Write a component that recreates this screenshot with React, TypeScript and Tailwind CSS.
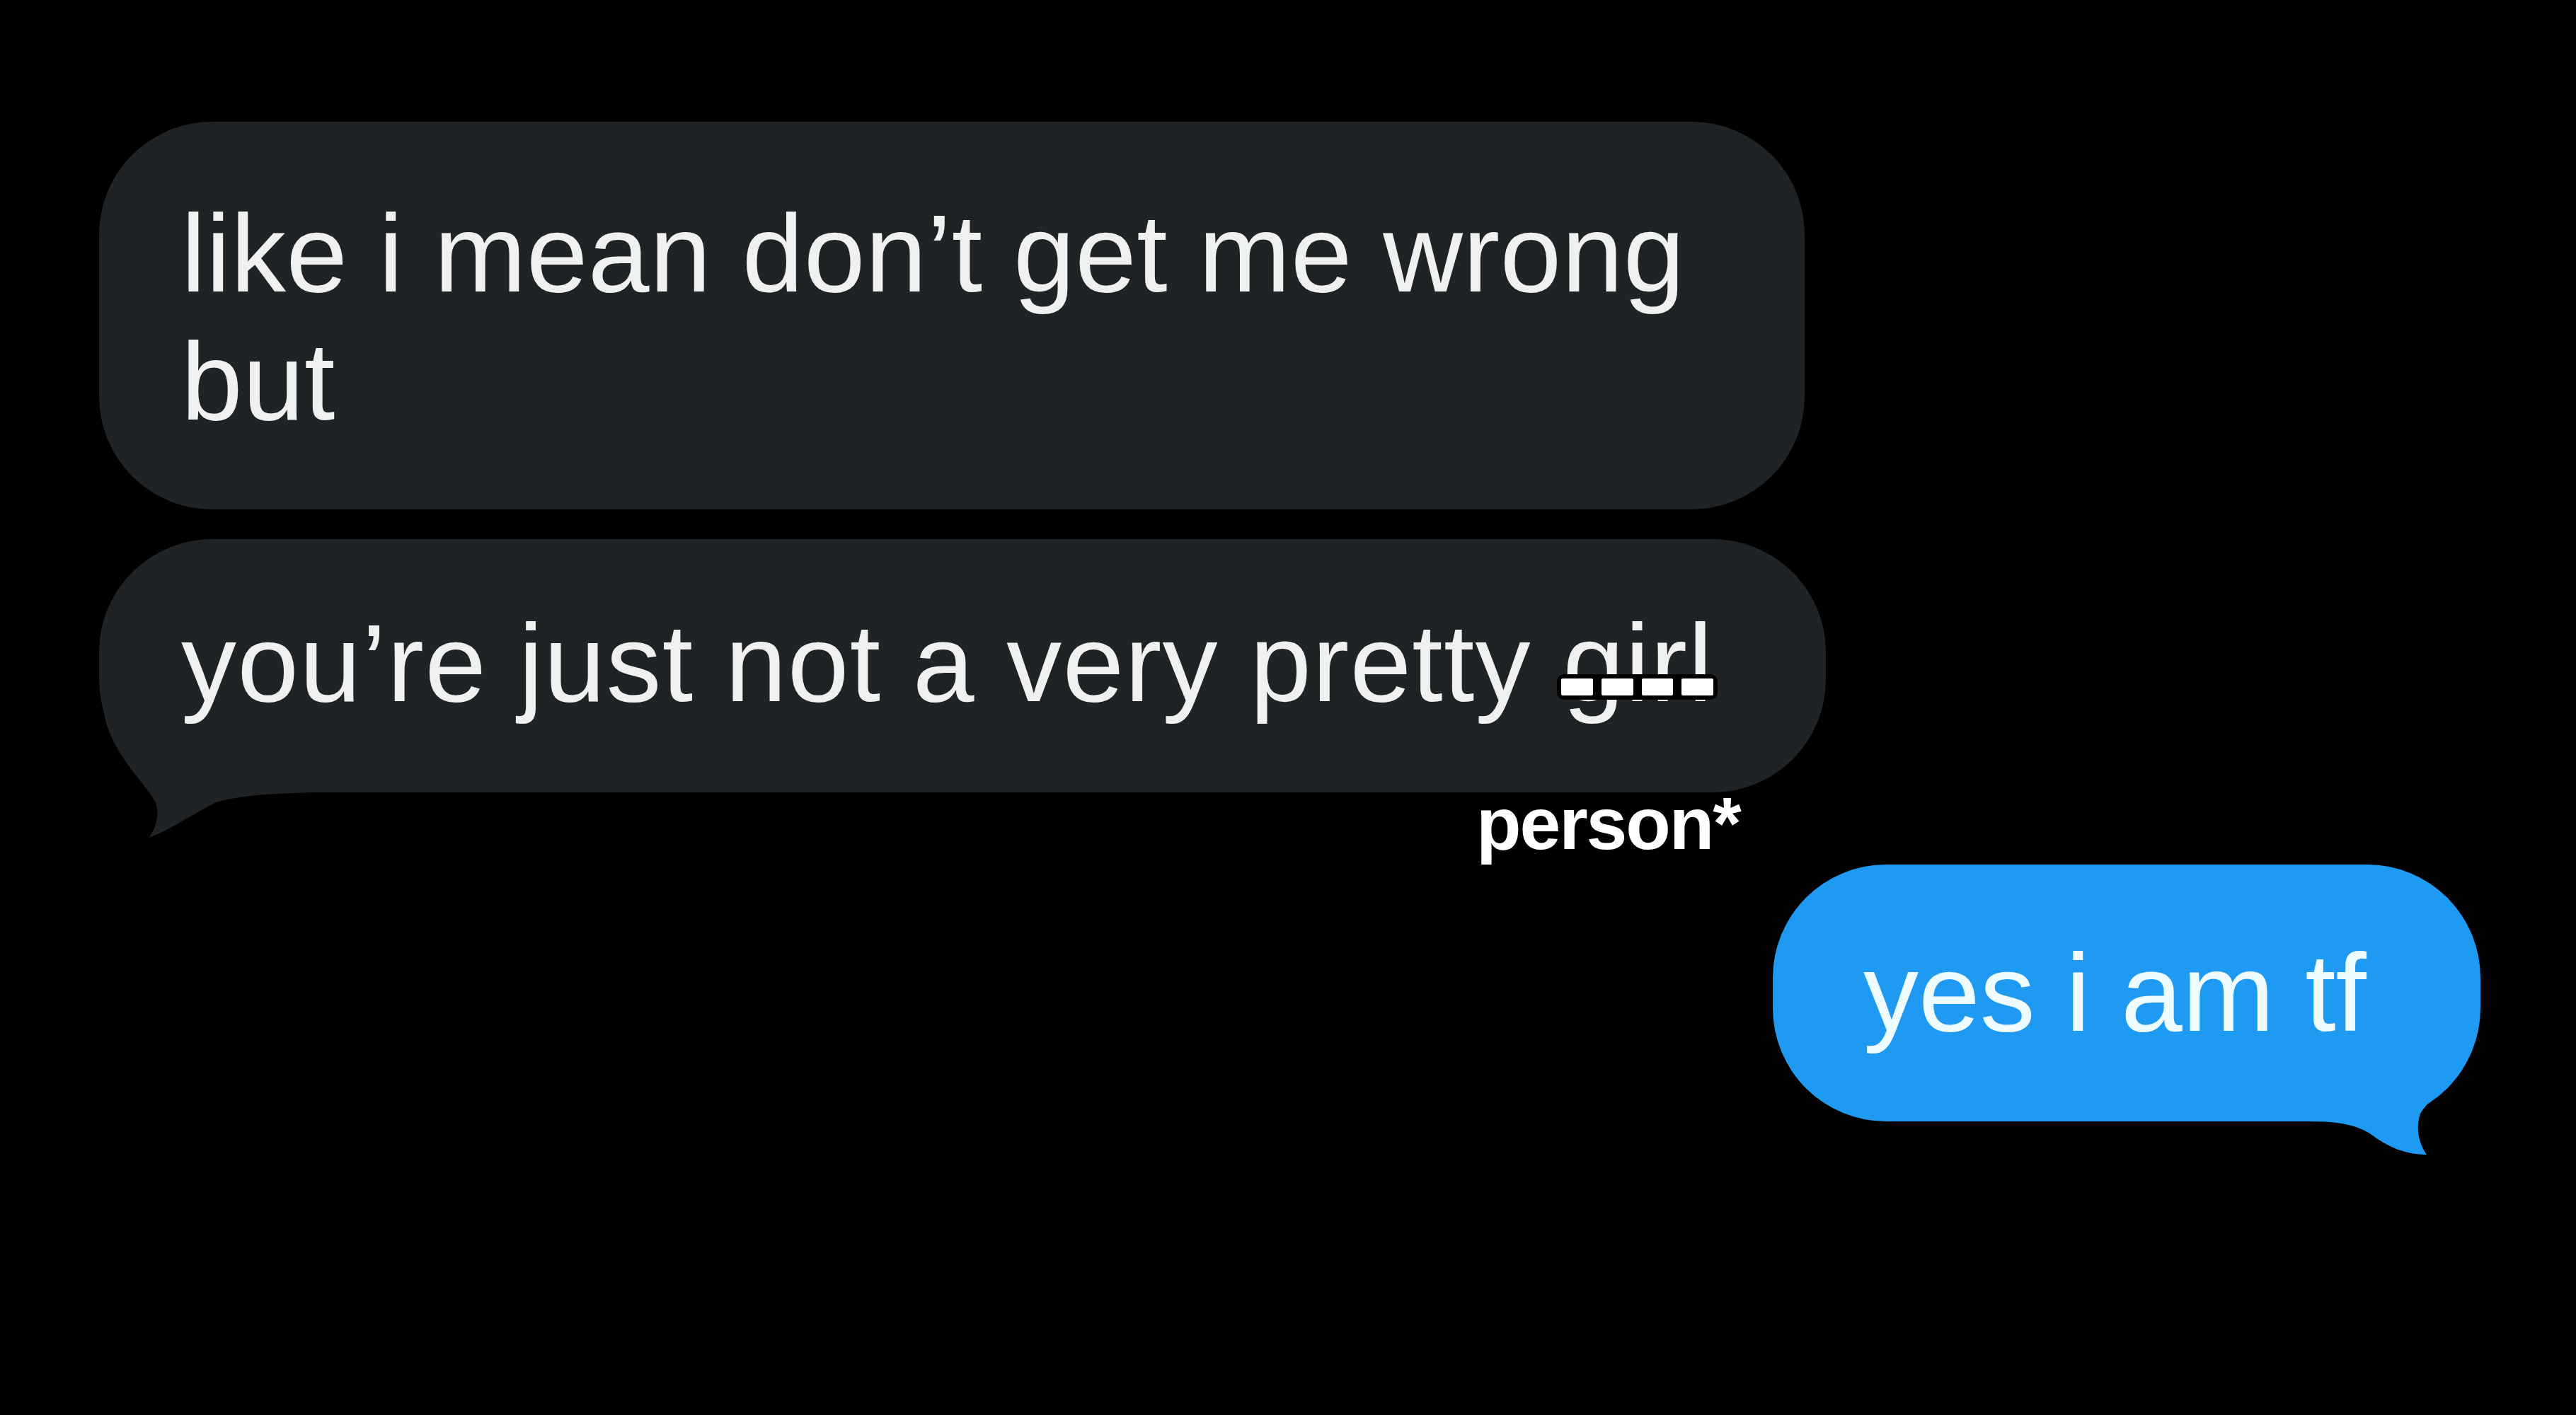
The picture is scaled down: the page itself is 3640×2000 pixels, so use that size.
const grayBubble = "relative bg-[#202326] rounded-[160px] text-[#eff0f0] text-[156px] leading-[181px] pl-[116px]";

const Strike = () => (
  <span className="absolute left-[-8px] right-[-6px] top-[103px] h-[36px] flex gap-[12px] p-[6px] bg-black rounded-[10px]">
    <span className="flex-1 bg-white rounded-[2px]" />
    <span className="flex-1 bg-white rounded-[2px]" />
    <span className="flex-1 bg-white rounded-[2px]" />
    <span className="flex-1 bg-white rounded-[2px]" />
  </span>
);

export default function App() {
  return (
    <div className="w-[3640px] h-[2000px] bg-black flex flex-col pt-[172px] pl-[140px] pr-[135px] font-['Liberation_Sans',Arial,sans-serif]">
      <div className={`${grayBubble} w-[2410px] pt-[96px] pb-[90px] tracking-[0.3px]`}>
        <span className="relative">
          like i mean don’t get me wrong
          <br />
          but
        </span>
      </div>

      <div className={`${grayBubble} w-[2440px] mt-[42px] pt-[85px] pb-[92px] tracking-[1.2px]`}>
        {/* tail */}
        <svg className="absolute left-0 top-0 overflow-visible" width="320" height="430" viewBox="0 0 320 430">
          <path
            d="M 6 240 C 14 300, 62 340, 80 372 C 86 390, 80 410, 70 422 C 95 414, 130 390, 165 372 C 200 362, 240 360, 300 358 L 300 240 Z"
            fill="#202326"
          />
        </svg>
        <span className="relative">
          you’re just not a very pretty{" "}
          <span className="relative">
            girl
            <Strike />
          </span>
        </span>
        <span className="absolute left-[1946px] top-[350px] text-white font-bold text-[104px] leading-none tracking-[-0.02em]">
          person*
        </span>
      </div>

      <div className="flex justify-end mt-[102px]">
        <div className="relative w-[1000px] bg-[#1f9af2] rounded-[160px] text-[#effcff] text-[156px] leading-[181px] pl-[128px] pt-[91px] pb-[91px]">
          <svg className="absolute left-0 top-0 overflow-visible" width="1000" height="420" viewBox="0 0 1000 420">
            <path
              d="M 990 240 C 985 300, 932 322, 915 352 C 908 372, 913 395, 924 410 C 895 410, 870 400, 845 381 C 825 368, 800 363, 760 363 L 760 240 Z"
              fill="#1f9af2"
            />
          </svg>
          <span className="relative">yes i am tf</span>
        </div>
      </div>
    </div>
  );
}
